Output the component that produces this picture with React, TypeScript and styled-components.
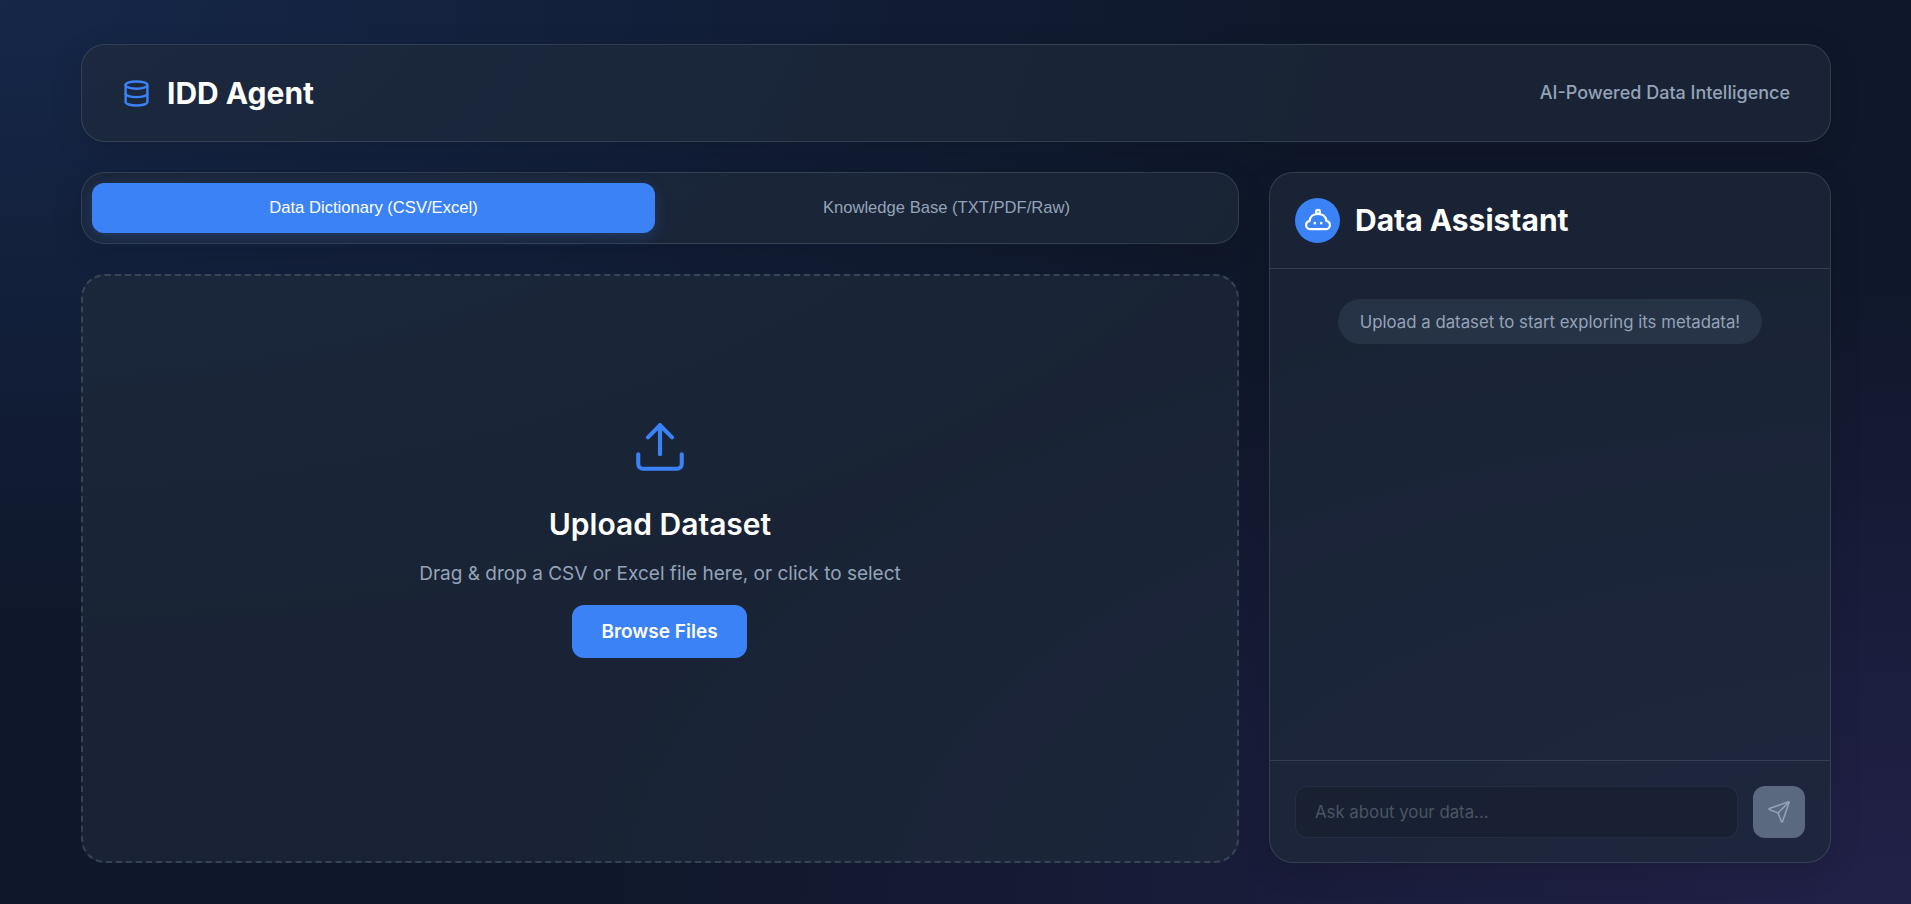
import React from "react";
import styled, { createGlobalStyle } from "styled-components";
import { Database, Upload, Send } from "lucide-react";

const GlobalStyle = createGlobalStyle`
  * { box-sizing: border-box; }
  html, body { margin: 0; height: 100%; }
  body {
    font-family: Inter, "Noto Sans", sans-serif;
    color: #fff;
    background-color: #0f172a;
  }
`;

const Page = styled.div`
  height: 904px;
  overflow: hidden;
  padding: 44px 80px 41px 81px;
  display: flex;
  flex-direction: column;
  gap: 30px;
  background:
    radial-gradient(at 0% 0%, rgba(59, 130, 246, 0.15), transparent 50%),
    radial-gradient(at 100% 100%, rgba(139, 92, 246, 0.15), transparent 50%),
    #0f172a;
`;

const Panel = styled.div`
  background: rgba(30, 41, 59, 0.7);
  border: 1px solid rgba(148, 163, 184, 0.2);
  border-radius: 24px;
  box-shadow: 0 8px 32px rgba(0, 0, 0, 0.12);
`;

const Header = styled(Panel)`
  height: 98px;
  padding: 0 40px;
  display: flex;
  align-items: center;
  justify-content: space-between;
`;

const Brand = styled.div`
  display: flex;
  align-items: center;
  gap: 16px;
  color: #3b82f6;
`;

const BrandName = styled.h1`
  margin: 0;
  font-size: 30px;
  font-weight: 700;
  color: #fff;
`;

const Tagline = styled.span`
  padding-bottom: 1px;
  font-size: 18px;
  font-weight: 500;
  color: #94a3b8;
`;

const Main = styled.div`
  flex: 1;
  min-height: 0;
  display: grid;
  grid-template-columns: 1158px 562px;
  gap: 30px;
`;

const LeftColumn = styled.div`
  display: flex;
  flex-direction: column;
  gap: 30px;
  min-height: 0;
`;

const Tabs = styled(Panel)`
  height: 72px;
  padding: 10px;
  display: flex;
  gap: 10px;
`;

const Tab = styled.button<{ $active?: boolean }>`
  flex: 1;
  border: 0;
  border-radius: 12px;
  font-family: "Liberation Sans", Arial, sans-serif;
  font-size: 16.6px;
  color: ${(p) => (p.$active ? "#fff" : "#94a3b8")};
  background: ${(p) => (p.$active ? "#3b82f6" : "transparent")};
  box-shadow: ${(p) => (p.$active ? "0 4px 14px rgba(59, 130, 246, 0.22)" : "none")};
`;

const DropZone = styled.div`
  flex: 1;
  padding-bottom: 62px;
  background: rgba(30, 41, 59, 0.7);
  border: 2px dashed rgba(148, 163, 184, 0.25);
  border-radius: 24px;
  display: flex;
  flex-direction: column;
  align-items: center;
  justify-content: center;
  color: #3b82f6;
`;

const DropTitle = styled.h2`
  margin: 30px 0 0;
  font-size: 30px;
  font-weight: 600;
  color: #fff;
`;

const DropHint = styled.p`
  margin: 20px 0 0;
  font-size: 19px;
  color: #94a3b8;
`;

const BrowseButton = styled.button`
  margin: 20px 1px 0 0;
  width: 175px;
  height: 53px;
  border: 0;
  border-radius: 12px;
  background: #3b82f6;
  color: #fff;
  font-family: Inter, sans-serif;
  font-size: 19px;
  font-weight: 600;
`;

const Chat = styled(Panel)`
  display: flex;
  flex-direction: column;
  min-height: 0;
`;

const ChatHeader = styled.div`
  height: 96px;
  padding: 0 25px;
  display: flex;
  align-items: center;
  gap: 15px;
  border-bottom: 1px solid rgba(148, 163, 184, 0.2);
`;

const Avatar = styled.div`
  width: 45px;
  height: 45px;
  border-radius: 50%;
  background: #3b82f6;
  display: flex;
  align-items: center;
  justify-content: center;
`;

const ChatTitle = styled.h2`
  margin: 0;
  padding-bottom: 2px;
  font-size: 30px;
  font-weight: 700;
  color: #fff;
`;

const Messages = styled.div`
  flex: 1;
  padding: 30px 25px;
  display: flex;
  flex-direction: column;
  align-items: center;
`;

const Bubble = styled.div`
  height: 45px;
  padding: 0 22px;
  border-radius: 23px;
  background: rgba(51, 65, 85, 0.5);
  display: flex;
  align-items: center;
  font-size: 16.8px;
  color: #94a3b8;
`;

const ChatFooter = styled.div`
  padding: 25px 25px 24px;
  display: flex;
  gap: 15px;
  border-top: 1px solid rgba(148, 163, 184, 0.2);
`;

const Input = styled.input`
  flex: 1;
  min-width: 0;
  height: 52px;
  padding: 0 19px;
  border: 1px solid rgba(148, 163, 184, 0.1);
  border-radius: 12px;
  background: rgba(20, 24, 40, 0.4);
  font-family: Inter, sans-serif;
  font-size: 16.8px;
  color: #fff;
  &::placeholder { color: #4b5563; }
`;

const SendButton = styled.button`
  width: 52px;
  height: 52px;
  border: 0;
  border-radius: 12px;
  background: #5a6880;
  color: #94a3b8;
  display: flex;
  align-items: center;
  justify-content: center;
`;

const BotIcon = () => (
  <svg width="26" height="26" viewBox="0 0 24 24" fill="none" stroke="#fff" strokeWidth="2" strokeLinejoin="round" strokeLinecap="round">
    <circle cx="12" cy="3.500" r="1.800" />
    <path d="M12 5.500C7.500 5.500 4.500 8 4.300 12C2.500 12.300 1 13.500 1 15.500C1 17.800 2.500 19.500 4.500 19.500H19.500C21.500 19.500 23 17.800 23 15.500C23 13.500 21.500 12.300 19.700 12C19.500 8 16.500 5.500 12 5.500Z" />
    <circle cx="9" cy="14" r="0.700" fill="#fff" strokeWidth="1" />
    <circle cx="15" cy="14" r="0.700" fill="#fff" strokeWidth="1" />
  </svg>
);

export default function App() {
  return (
    <>
      <GlobalStyle />
      <Page>
        <Header>
          <Brand>
            <Database size={29} strokeWidth={2} />
            <BrandName>IDD Agent</BrandName>
          </Brand>
          <Tagline>AI-Powered Data Intelligence</Tagline>
        </Header>
        <Main>
          <LeftColumn>
            <Tabs>
              <Tab $active>Data Dictionary (CSV/Excel)</Tab>
              <Tab>Knowledge Base (TXT/PDF/Raw)</Tab>
            </Tabs>
            <DropZone>
              <Upload size={58} strokeWidth={1.7} />
              <DropTitle>Upload Dataset</DropTitle>
              <DropHint>Drag &amp; drop a CSV or Excel file here, or click to select</DropHint>
              <BrowseButton>Browse Files</BrowseButton>
            </DropZone>
          </LeftColumn>
          <Chat>
            <ChatHeader>
              <Avatar>
                <BotIcon />
              </Avatar>
              <ChatTitle>Data Assistant</ChatTitle>
            </ChatHeader>
            <Messages>
              <Bubble>Upload a dataset to start exploring its metadata!</Bubble>
            </Messages>
            <ChatFooter>
              <Input placeholder="Ask about your data..." />
              <SendButton>
                <Send size={24} strokeWidth={1.5} />
              </SendButton>
            </ChatFooter>
          </Chat>
        </Main>
      </Page>
    </>
  );
}
